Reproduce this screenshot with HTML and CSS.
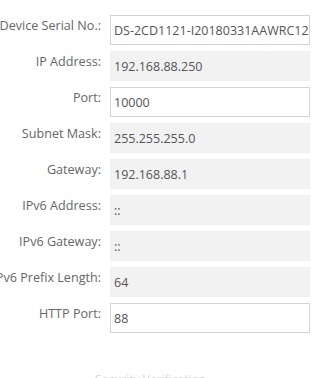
FILE: index.html
```html
<!DOCTYPE html>
<html>
<head>
<meta charset="utf-8">
<link rel="stylesheet" href="styles.css">
</head>
<body>
<div class="form">
  <div class="row"><label class="lbl">Device Serial No.:</label><div class="field edit">DS-2CD1121-I20180331AAWRC12</div></div>
  <div class="row"><label class="lbl">IP Address:</label><div class="field ro">192.168.88.250</div></div>
  <div class="row"><label class="lbl">Port:</label><div class="field edit">10000</div></div>
  <div class="row"><label class="lbl">Subnet Mask:</label><div class="field ro">255.255.255.0</div></div>
  <div class="row"><label class="lbl">Gateway:</label><div class="field ro">192.168.88.1</div></div>
  <div class="row"><label class="lbl">IPv6 Address:</label><div class="field ro">::</div></div>
  <div class="row"><label class="lbl">IPv6 Gateway:</label><div class="field ro">::</div></div>
  <div class="row"><label class="lbl">IPv6 Prefix Length:</label><div class="field ro">64</div></div>
  <div class="row"><label class="lbl">HTTP Port:</label><div class="field edit">88</div></div>
</div>
<div class="verify">Security Verification</div>
</body>
</html>
```
FILE: styles.css
```css
html, body {
  margin: 0;
  padding: 0;
  background: #fff;
  overflow: hidden;
}
body {
  font-family: "Open Sans", "Noto Sans", sans-serif;
  font-size: 12px;
}
.form {
  display: flex;
  flex-direction: column;
  gap: 6px;
  padding-top: 15px;
}
.row {
  display: grid;
  grid-template-columns: 101px 200px;
  column-gap: 9px;
}
.lbl {
  display: flex;
  justify-content: flex-end;
  white-space: nowrap;
  color: #666;
  font-size: 12.6px;
  line-height: 22px;
}
.field {
  box-sizing: border-box;
  height: 30px;
  padding: 2px 0 0 3px;
  line-height: 26px;
  color: #555;
  font-size: 12.5px;
  white-space: nowrap;
  overflow: hidden;
  border: 1px solid transparent;
}
.edit {
  background: #fff;
  border-color: #d4d4d4;
}
.ro {
  background: #f2f2f2;
  border-color: #f0f0f0;
}
.verify {
  margin-top: 39px;
  margin-left: 95px;
  color: #d8d8d8;
  font-size: 12px;
  line-height: 16px;
}
```
